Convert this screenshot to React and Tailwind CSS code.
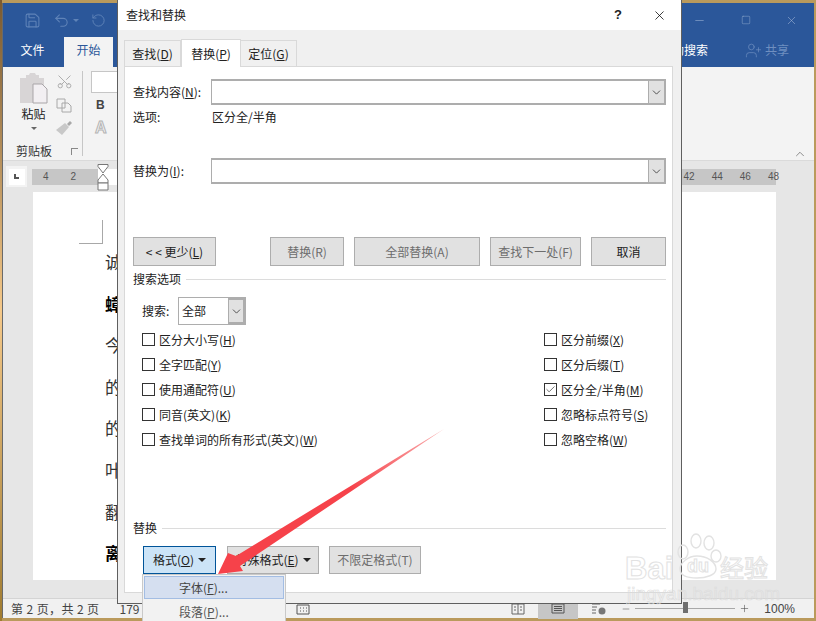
import React from "react";
import { ChevronDown, ChevronUp, Minus, Plus, Square, X, UserPlus, Undo2, RotateCw, Save, Scissors, Check } from "lucide-react";

const font = { fontFamily: '"Noto Sans CJK SC", "Liberation Sans", sans-serif' };

const leftRuler = ["4", "2"];
const rightRuler = ["42", "44", "46", "48"];
const pageLines = [
  { text: "诚", bold: false },
  { text: "蟑", bold: true },
  { text: "今", bold: false },
  { text: "的", bold: false },
  { text: "的", bold: false },
  { text: "叶", bold: false },
  { text: "翻", bold: false },
  { text: "离", bold: true },
];
const leftOptions = [
  ["区分大小写", "H"],
  ["全字匹配", "Y"],
  ["使用通配符", "U"],
  ["同音(英文)", "K"],
  ["查找单词的所有形式(英文)", "W"],
];
const rightOptions = [
  ["区分前缀", "X", false],
  ["区分后缀", "T", false],
  ["区分全/半角", "M", true],
  ["忽略标点符号", "S", false],
  ["忽略空格", "W", false],
];

const Key = ({ label, k }) => (
  <span>
    {label}(<span className="underline">{k}</span>)
  </span>
);

const Option = ({ label, k, checked }) => (
  <div className="flex items-center h-[25px] gap-[4px] text-[12px] text-[#222]">
    <span className="w-[13px] h-[13px] border border-[#333] bg-white flex items-center justify-center shrink-0">
      {checked && <Check size={11} strokeWidth={1.8} className="text-[#555]" />}
    </span>
    <Key label={label} k={k} />
  </div>
);

const ComboInput = () => (
  <div className="flex-1 h-[26px] border-2 border-[#adadad] border-l-1 border-t-2 bg-white flex justify-end">
    <span className="w-[16px] bg-[#e1e1e1] border-l border-[#adadad] flex items-center justify-center">
      <ChevronDown size={13} strokeWidth={1.5} className="text-[#333]" />
    </span>
  </div>
);

const GrayButton = ({ className, children }) => (
  <div className={`h-[29px] bg-[#e1e1e1] border border-[#adadad] flex items-center justify-center text-[12px] ${className}`}>
    {children}
  </div>
);

const Caret = () => <span className="ml-[4px] w-0 h-0 border-l-[4px] border-r-[4px] border-t-[4px] border-l-transparent border-r-transparent border-t-[#222]" />;

const Divider = ({ label, className }) => (
  <div className={`flex items-center gap-[5px] text-[12px] text-[#222] ${className}`}>
    <span>{label}</span>
    <span className="flex-1 h-px bg-[#dcdcdc]" />
  </div>
);

const Dialog = () => (
  <div className="absolute left-[117px] top-0 w-[565px] h-[604px] border-x border-b border-[#5f5f5f] bg-[#f0f0f0] flex flex-col">
    <div className="h-[30px] bg-white flex items-center pl-[8px] pr-[14px] text-[12px] text-[#222]">
      <span className="flex-1">查找和替换</span>
      <span className="font-bold mr-[30px] text-[13px]" style={{ fontFamily: "Liberation Sans" }}>?</span>
      <X size={15} strokeWidth={1.2} className="text-black" />
    </div>

    {/* tabs */}
    <div className="flex items-end h-[36px] pl-[6px] text-[12px] text-[#222]">
      <div className="h-[26px] w-[57px] flex items-center justify-center bg-[#f0f0f0] border border-b-0 border-[#d9d9d9]"><Key label="查找" k="D" /></div>
      <div className="h-[28px] w-[60px] flex items-center justify-center bg-white border border-b-0 border-[#d9d9d9] relative top-px z-10"><Key label="替换" k="P" /></div>
      <div className="h-[26px] w-[56px] flex items-center justify-center bg-[#f0f0f0] border border-b-0 border-l-0 border-[#d9d9d9]"><Key label="定位" k="G" /></div>
    </div>

    <div className="ml-[6px] w-[549px] h-[527px] bg-white border border-[#d9d9d9] pl-[8px] pr-[6px] pt-[12px] text-[12px] text-[#222]">
      <div className="flex items-center">
        <span className="w-[78px]"><Key label="查找内容" k="N" />:</span>
        <ComboInput />
      </div>
      <div className="flex items-center h-[23px]">
        <span className="w-[79px]">选项:</span>
        <span>区分全/半角</span>
      </div>
      <div className="flex items-center mt-[30px]">
        <span className="w-[78px]"><Key label="替换为" k="I" />:</span>
        <ComboInput />
      </div>

      <div className="flex mt-[53px] gap-[10px]">
        <GrayButton className="w-[83px] mr-[44px]">&lt; &lt; 更少(<span className="underline">L</span>)</GrayButton>
        <GrayButton className="w-[74px] text-[#6d6d6d]">替换(R)</GrayButton>
        <GrayButton className="w-[126px] text-[#6d6d6d]">全部替换(A)</GrayButton>
        <GrayButton className="w-[91px] text-[#6d6d6d]">查找下一处(F)</GrayButton>
        <GrayButton className="w-[75px]">取消</GrayButton>
      </div>

      <Divider label="搜索选项" className="mt-[4px] h-[18px]" />

      <div className="flex items-center ml-[9px] mt-[9px] h-[28px]">
        <span className="w-[36px]">搜索:</span>
        <div className="w-[68px] h-[28px] border border-[#adadad] flex items-center pl-[3px] bg-white">
          <span className="flex-1">全部</span>
          <span className="w-[17px] h-full bg-[#e1e1e1] border-2 border-l-1 border-[#adadad] flex items-center justify-center">
            <ChevronDown size={13} strokeWidth={1.5} className="text-[#333]" />
          </span>
        </div>
      </div>

      <div className="flex justify-between ml-[9px] mt-[2px]">
        <div className="flex flex-col">
          {leftOptions.map(([label, k]) => <Option key={label} label={label} k={k} />)}
        </div>
        <div className="flex flex-col w-[122px]">
          {rightOptions.map(([label, k, checked]) => <Option key={label} label={label} k={k} checked={checked} />)}
        </div>
      </div>

      <Divider label="替换" className="mt-[67px] h-[18px]" />

      <div className="flex ml-[10px] mt-[9px] gap-[10px]">
        <div className="w-[73px] h-[28px] mr-px bg-[#cce4f7] border border-[#005499] flex items-center justify-center">
          <Key label="格式" k="O" /><Caret />
        </div>
        <GrayButton className="w-[92px] !h-[28px]"><Key label="特殊格式" k="E" /><Caret /></GrayButton>
        <GrayButton className="w-[92px] !h-[28px] text-[#6d6d6d]">不限定格式(T)</GrayButton>
      </div>
    </div>
  </div>
);

const FormatMenu = () => (
  <div className="absolute left-[142px] top-[574px] w-[144px] h-[47px] bg-[#f2f2f2] border border-b-0 border-[#c9c9c9] p-px text-[12px] text-[#444]">
    <div className="h-[23px] bg-[#d5dff0] border border-[#a3bde3] flex items-center pl-[34px]"><span>字体(<span className="underline">F</span>)...</span></div>
    <div className="h-[22px] flex items-center pl-[35px] pt-[4px] text-[#555]"><span>段落(<span className="underline">P</span>)...</span></div>
  </div>
);

const RedArrow = () => (
  <svg className="absolute left-0 top-0 pointer-events-none" width="816" height="621">
    <defs>
      <linearGradient id="tail" x1="444" y1="429" x2="350" y2="488" gradientUnits="userSpaceOnUse">
        <stop offset="0" stopColor="#f9b0b0" />
        <stop offset="1" stopColor="#f6424a" />
      </linearGradient>
    </defs>
    <polygon points="444,429 236,556 228,553 218,574 243,571 240,566" fill="url(#tail)" />
  </svg>
);

const Watermark = () => (
  <div className="absolute left-[625px] top-[532px] w-[180px] h-[72px] pointer-events-none">
    <svg className="absolute left-[48px] top-0" width="50" height="50" viewBox="0 0 50 50" fill="none" stroke="#e2e2e2" strokeWidth="1.4">
      <ellipse cx="10" cy="20" rx="5" ry="7" />
      <ellipse cx="23" cy="9" rx="5" ry="7" />
      <ellipse cx="36" cy="11" rx="5" ry="7" />
      <ellipse cx="43" cy="24" rx="5" ry="6" />
      <path d="M24 24c-9 0-17 7-17 13 0 7 8 9 17 9s19-3 19-9c0-7-9-13-19-13z" />
    </svg>
    <span className="absolute left-0 top-[21px] text-[31px] font-bold leading-none text-transparent" style={{ WebkitTextStroke: "1px #e2e2e2", fontFamily: "Liberation Sans" }}>Bai</span>
    <span className="absolute left-[62px] top-[25px] text-[18px] font-bold leading-none text-transparent" style={{ WebkitTextStroke: "1px #e2e2e2", fontFamily: "Liberation Sans" }}>du</span>
    <span className="absolute left-[95px] top-[23px] text-[24px] leading-none text-transparent" style={{ WebkitTextStroke: "1px #e2e2e2" }}>经验</span>
    <span className="absolute left-[2px] top-[52px] text-[19px] leading-none text-transparent" style={{ WebkitTextStroke: "0.6px #dcdcdc", fontFamily: "Liberation Sans" }}>jingyan.baidu.com</span>
  </div>
);

const Ribbon = () => (
  <div className="h-[94px] bg-[#f3f3f3] border-b border-[#dadada] flex relative">
    <div className="w-[80px] border-r border-[#c6c6c6] my-[4px] relative flex flex-col items-center shrink-0">
      <div className="flex pl-[16px] w-full gap-[8px] pt-[2px]">
        <div className="flex flex-col items-center">
          <svg width="29" height="31" viewBox="0 0 29 31">
            <path d="M1 5h6V2h3l1-2h5l1 2h3v3h5v25H1z" fill="#d8d5d6" />
            <path d="M14 11h9l5 5v14H14z" fill="#f2eff2" stroke="#a9a5a8" />
          </svg>
          <span className="text-[12px] mt-[2px] leading-[16px] text-[#222]">粘贴</span>
          <span className="mt-[5px] w-0 h-0 border-l-[3px] border-r-[3px] border-t-[3px] border-l-transparent border-r-transparent border-t-[#666]" />
        </div>
        <div className="flex flex-col gap-[8px] text-[#a8a8a8]">
          <Scissors size={17} strokeWidth={1.3} className="-rotate-90" />
          <svg width="16" height="15" viewBox="0 0 16 15" fill="none" stroke="#a8a8a8"><path d="M1 1h8v9H1zM6 5h6l3 3v6H6z" fill="#f3f3f3" /></svg>
          <svg width="17" height="14" viewBox="0 0 17 14"><path d="M0 9l9-7 4 4-7 8z" fill="#c8c8c8" /><path d="M11 3l3-3 2 2-3 3z" fill="#a8a8a8" /></svg>
        </div>
      </div>
      <div className="absolute bottom-[-2px] left-0 w-full flex items-center text-[12px] leading-[14px] text-[#333] pl-[13px]">
        <span>剪贴板</span>
        <span className="ml-[19px] w-[7px] h-[7px] border-l border-b border-[#888] rotate-90" />
      </div>
    </div>
    <div className="pl-[8px] pt-[4px] flex flex-col">
      <div className="w-[30px] h-[22px] bg-white border border-[#c6c6c6]" />
      <span className="mt-[3px] ml-[5px] font-bold text-[12px] text-[#444]" style={{ fontFamily: "Liberation Sans" }}>B</span>
      <span className="mt-[3px] ml-[4px] font-bold text-[16px] leading-[22px] text-transparent" style={{ WebkitTextStroke: "1px #b4b4b4", fontFamily: "Liberation Sans" }}>A</span>
    </div>
    <ChevronUp size={14} strokeWidth={1} className="absolute right-[7px] bottom-[-1px] text-[#444]" />
  </div>
);

const Ruler = () => (
  <div className="h-[31px] bg-[#e6e6e6] flex items-center relative">
    <div className="w-[21px] h-[21px] bg-[#f3f3f3] ml-[3px] flex items-center justify-center shrink-0">
      <span className="w-[16px] h-[16px] bg-white flex items-center justify-center">
        <span className="w-[5px] h-[5px] border-l-2 border-b-2 border-[#555]" />
      </span>
    </div>
    <div className="ml-[5px] w-[744px] h-[16px] bg-white flex text-[10px] text-[#555] leading-[16px]" style={{ fontFamily: "Liberation Sans" }}>
      <div className="w-[66px] bg-[#c6c6c6] flex gap-[22px] pl-[11px]">
        {leftRuler.map((n) => <span key={n}>{n}</span>)}
      </div>
      <div className="flex-1" />
      <div className="w-[95px] bg-[#c6c6c6] flex gap-[17px] justify-end">
        {rightRuler.map((n) => <span key={n} className="relative left-[3px]">{n}</span>)}
      </div>
    </div>
    {/* indent marker */}
    <svg className="absolute left-[94px] top-[3px]" width="12" height="28" viewBox="0 0 12 28" fill="#fff" stroke="#777">
      <path d="M1 0.5h10v2L6 9 1 2.5z" />
      <path d="M6 10l5 6v3H1v-3z" />
      <path d="M1 19h10v7H1z" />
    </svg>
  </div>
);

const Page = () => (
  <div className="flex-1 bg-[#e6e6e6] min-h-0 pl-[30px] pr-[38px]">
    <div className="bg-white h-[388px] pt-[28px] pl-[72px] relative">
      <span className="block w-[24px] h-[24px] -ml-[13px] border-r border-b border-[#a8a8a8] -translate-x-[13px]" />
      <div className="flex flex-col mt-[6px]" style={{ fontFamily: '"Noto Sans CJK SC", serif' }}>
        {pageLines.map((line, i) => (
          <span key={i} className={`text-[17px] h-[41.6px] leading-[24px] text-[#333] ${line.bold ? "font-bold text-black" : ""}`}>{line.text}</span>
        ))}
      </div>
    </div>
  </div>
);

const StatusBar = () => (
  <div className="h-[20px] bg-[#f1f1f1] border-t border-[#d4d4d4] flex items-center text-[12px] text-[#444] pl-[8px] relative">
    <span className="tracking-[0.4px]">第 2 页，共 2 页</span>
    <span className="ml-[20px]">179</span>
    <svg className="absolute left-[293px] top-[3px]" width="14" height="13" viewBox="0 0 14 13" fill="none" stroke="#555"><path d="M1 3h12v9H1zM1 1h12M4 6h1M7 6h1M10 6h1M4 9h1M7 9h1M10 9h1" /></svg>
    <div className="absolute left-[508px] top-0 h-full flex items-center">
      <svg width="14" height="12" viewBox="0 0 14 12" fill="none" stroke="#666"><path d="M1 1h12v10H1zM7 1v10M3 4h2M3 7h2M9 4h2M9 7h2" /></svg>
      <span className="ml-[13px] w-[40px] h-[20px] bg-[#c6c6c6] flex items-center justify-center">
        <svg width="14" height="11" viewBox="0 0 14 11" fill="none" stroke="#555"><path d="M1 1h12v9H1zM3 3.5h8M3 5.5h8M3 7.5h8" /></svg>
      </span>
      <svg className="ml-[13px]" width="15" height="12" viewBox="0 0 15 12" fill="none" stroke="#666"><path d="M1 1h8M1 4h5M1 7h4M1 10h4" /><circle cx="11" cy="8" r="3.5" fill="#777" stroke="none" /></svg>
    </div>
    <div className="absolute right-[19px] top-0 h-full flex items-center">
      <Minus size={10} strokeWidth={1.2} className="text-[#444]" />
      <span className="ml-[4px] w-[100px] h-px bg-[#a8a8a8] relative">
        <span className="absolute left-[48px] -top-[6px] w-[5px] h-[11px] bg-[#6f6f6f]" />
      </span>
      <Plus size={11} strokeWidth={1.2} className="ml-[4px] text-[#444]" />
      <span className="ml-[14px] text-[12px]" style={{ fontFamily: "Liberation Sans" }}>100%</span>
    </div>
  </div>
);

const App = () => {
  return (
    <div className="relative w-[816px] h-[621px] overflow-hidden bg-[#ba9a5c]" style={font}>
      <div className="absolute left-0 top-0 w-[2px] h-full bg-gradient-to-b from-[#7a5a30] via-[#f5c98a] to-[#a07c30]" />
      {/* word window */}
      <div className="ml-[2px] mr-[2px] mt-[3px] h-[615px] border-l border-[#6a6a6a] flex flex-col bg-[#e6e6e6]">
        <div className="h-[64px] bg-[#2b579a] relative shrink-0">
          <div className="flex items-center h-[34px] pl-[21px] gap-[12px] text-[#5f83b8]">
            <Save size={17} strokeWidth={1.5} />
            <Undo2 size={17} strokeWidth={1.5} />
            <span className="-ml-[9px] w-0 h-0 border-l-[3px] border-r-[3px] border-t-[3px] border-l-transparent border-r-transparent border-t-[#5f83b8]" />
            <RotateCw size={15} strokeWidth={1.5} className="-scale-x-100" />
          </div>
          <div className="absolute left-0 bottom-0 flex text-[12px] h-[30px] items-center">
            <span className="w-[59px] pb-[4px] mr-[2px] text-center text-white">文件</span>
            <span className="w-[49px] h-[30px] pb-[4px] bg-[#f3f3f3] text-[#2b579a] flex items-center justify-center">开始</span>
          </div>
          <div className="absolute right-0 top-0 h-[34px] flex items-center text-[#a5bad9] w-[132px] pl-[11px] justify-between pr-[16px]">
            <Minus size={13} strokeWidth={1} />
            <Square size={10} strokeWidth={1} />
            <X size={13} strokeWidth={1} />
          </div>
          <div className="absolute right-[25px] bottom-0 h-[30px] pb-[4px] flex items-center text-[12px] text-[#6f8fc0]">
            <UserPlus size={17} strokeWidth={1} />
            <span className="ml-[3px]">共享</span>
          </div>
          <span className="absolute left-[669px] bottom-0 h-[30px] pb-[4px] flex items-center text-[12px] text-white whitespace-nowrap">助搜索</span>
        </div>
        <Ribbon />
        <Ruler />
        <Page />
        <StatusBar />
      </div>

      <Dialog />
      <Watermark />
      <FormatMenu />
      <RedArrow />
    </div>
  );
};

export default App;
